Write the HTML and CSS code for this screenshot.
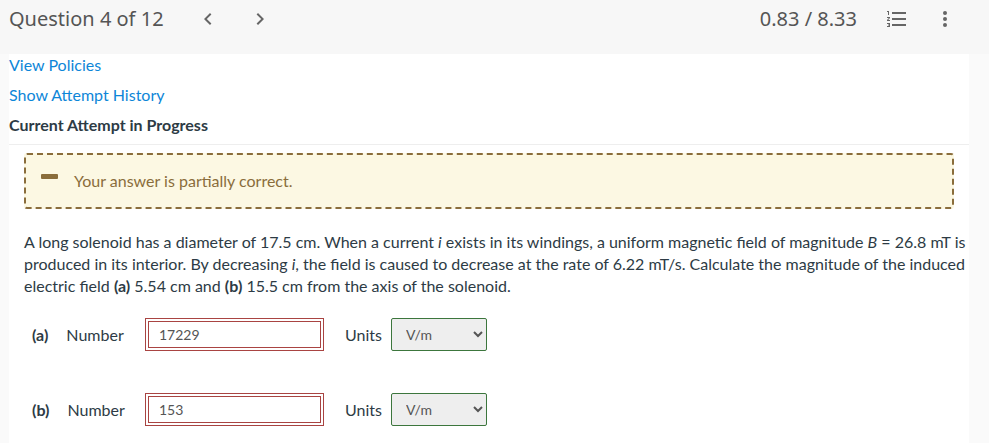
FILE: index.html
```
<!DOCTYPE html>
<html lang="en">
<head>
    <meta charset="UTF-8">
    <title>Question 4 of 12</title>
    <meta name="viewport" content="width=device-width, initial-scale=1">
    <link rel="stylesheet" href="styles.css">
</head>
<body>
<header class="toolbar">
    <h1 class="toolbar-title">Question 4 of 12</h1>
    <nav class="toolbar-nav">
        <button type="button" class="icon-button" aria-label="Previous question">
            <svg width="24" height="24" viewBox="0 0 24 24"><path d="M15.4 7.4 14 6l-6 6 6 6 1.4-1.4-4.6-4.6z"/></svg>
        </button>
        <button type="button" class="icon-button" aria-label="Next question">
            <svg width="24" height="24" viewBox="0 0 24 24"><path d="M10 6 8.6 7.4l4.6 4.6-4.6 4.6L10 18l6-6z"/></svg>
        </button>
    </nav>
    <span class="toolbar-score">0.83 / 8.33</span>
    <div class="toolbar-actions">
        <button type="button" class="icon-button" aria-label="Question list">
            <svg width="24" height="24" viewBox="0 0 24 24"><path d="M7 5h14v2H7zM7 11h14v2H7zM7 17h14v2H7zM2 4h2v4H3V5H2zM2 10h3v.9L3.2 13H5v1H2v-.9L3.8 11H2zM2 16h3v4H2v-1h2v-.5H3v-1h1V17H2z"/></svg>
        </button>
        <button type="button" class="icon-button" aria-label="More options">
            <svg width="24" height="24" viewBox="0 0 24 24"><circle cx="12" cy="6" r="2"/><circle cx="12" cy="12" r="2"/><circle cx="12" cy="18" r="2"/></svg>
        </button>
    </div>
</header>

<main class="content">
    <div class="attempt-links">
        <a href="#policies">View Policies</a>
        <a href="#history">Show Attempt History</a>
        <h2 class="attempt-title">Current Attempt in Progress</h2>
    </div>

    <form class="question">
        <div class="feedback" role="status">
            <span class="feedback-icon"></span>
            Your answer is partially correct.
        </div>

        <p class="question-text">A long solenoid has a diameter of 17.5 cm. When a current <i>i</i> exists in its windings, a uniform magnetic field of magnitude <i>B</i> = 26.8 mT is produced in its interior. By decreasing <i>i</i>, the field is caused to decrease at the rate of 6.22 mT/s. Calculate the magnitude of the induced electric field <b>(a)</b> 5.54 cm and <b>(b)</b> 15.5 cm from the axis of the solenoid.</p>

        <div class="answer">
            <label class="answer-label" for="number-a"><b>(a)</b> <span>Number</span></label>
            <input type="text" class="answer-input" id="number-a" value="17229">
            <label class="units-label" for="units-a">Units</label>
            <select class="units-select" id="units-a">
                <option>V/m</option>
            </select>
        </div>

        <div class="answer">
            <label class="answer-label" for="number-b"><b>(b)</b> <span>Number</span></label>
            <input type="text" class="answer-input" id="number-b" value="153">
            <label class="units-label" for="units-b">Units</label>
            <select class="units-select" id="units-b">
                <option>V/m</option>
            </select>
        </div>
    </form>
</main>
</body>
</html>
```

FILE: styles.css
```
* {
    box-sizing: border-box;
    margin: 0;
}

body {
    --text-color: #2d3b45;
    --link-color: #0d86d8;
    --warning-color: #8a6d3b;
    --error-color: #a94442;
    --success-color: #3c763d;
    min-height: 100vh;
    display: flex;
    flex-direction: column;
    background-color: #fafafa;
    color: var(--text-color);
    font-family: Lato, sans-serif;
    font-size: 16px;
    line-height: 22px;
}

a {
    color: var(--link-color);
    text-decoration: none;
}

/* toolbar */

.toolbar {
    display: flex;
    align-items: center;
    padding: 5px 32px 21px 9px;
    background-color: #f7f7f7;
    color: #555;
    font-family: "Noto Sans", sans-serif;
    font-size: 20px;
    line-height: 28px;
}

.toolbar-title {
    font-size: inherit;
    font-weight: 400;
}

.toolbar-nav,
.toolbar-actions {
    display: flex;
}

.toolbar-nav {
    gap: 28px;
    margin-left: 32px;
}

.toolbar-score {
    margin-left: auto;
}

.toolbar-actions {
    gap: 24px;
    margin-left: 28px;
}

.icon-button {
    display: flex;
    padding: 0;
    border: 0;
    background: none;
    color: #666;
    cursor: pointer;
}

.icon-button svg {
    fill: currentColor;
}

/* question */

.content {
    flex: 1;
    margin: 0 20px 0 9px;
    background-color: #fff;
}

.attempt-links {
    display: flex;
    flex-direction: column;
    align-items: flex-start;
    gap: 8px;
    padding-bottom: 8px;
    border-bottom: 1px solid #eee;
}

.attempt-title {
    font-size: 16px;
    font-weight: 700;
    line-height: 22px;
}

.question {
    padding: 8px 0 8px 15px;
}

.feedback {
    display: flex;
    align-items: center;
    gap: 16px;
    margin-right: 15px;
    padding: 15px;
    border: 2px dashed var(--warning-color);
    border-radius: 3px;
    background-color: #fcf8e3;
    color: var(--warning-color);
}

.feedback-icon {
    width: 17px;
    height: 5px;
    margin-bottom: 9px;
    border-radius: 1px;
    background-color: var(--warning-color);
}

.question-text {
    margin: 22px 0 21px;
}

.answer {
    display: flex;
    align-items: center;
    padding-left: 8px;
}

.answer + .answer {
    margin-top: 42px;
}

.answer-label {
    display: flex;
    gap: 18px;
    width: 113px;
}

.answer-input,
.units-select {
    height: 33px;
    font-family: inherit;
    font-size: 14px;
    color: #555;
}

.answer-input {
    width: 179px;
    padding: 0 10px;
    border: 4px double var(--error-color);
    background-color: #fff;
}

.units-label {
    margin: 0 9px 0 21px;
}

.units-select {
    width: 96px;
    padding: 0 0 0 10px;
    border: 1px solid var(--success-color);
    border-radius: 2px;
    background-color: #eee;
}
```
